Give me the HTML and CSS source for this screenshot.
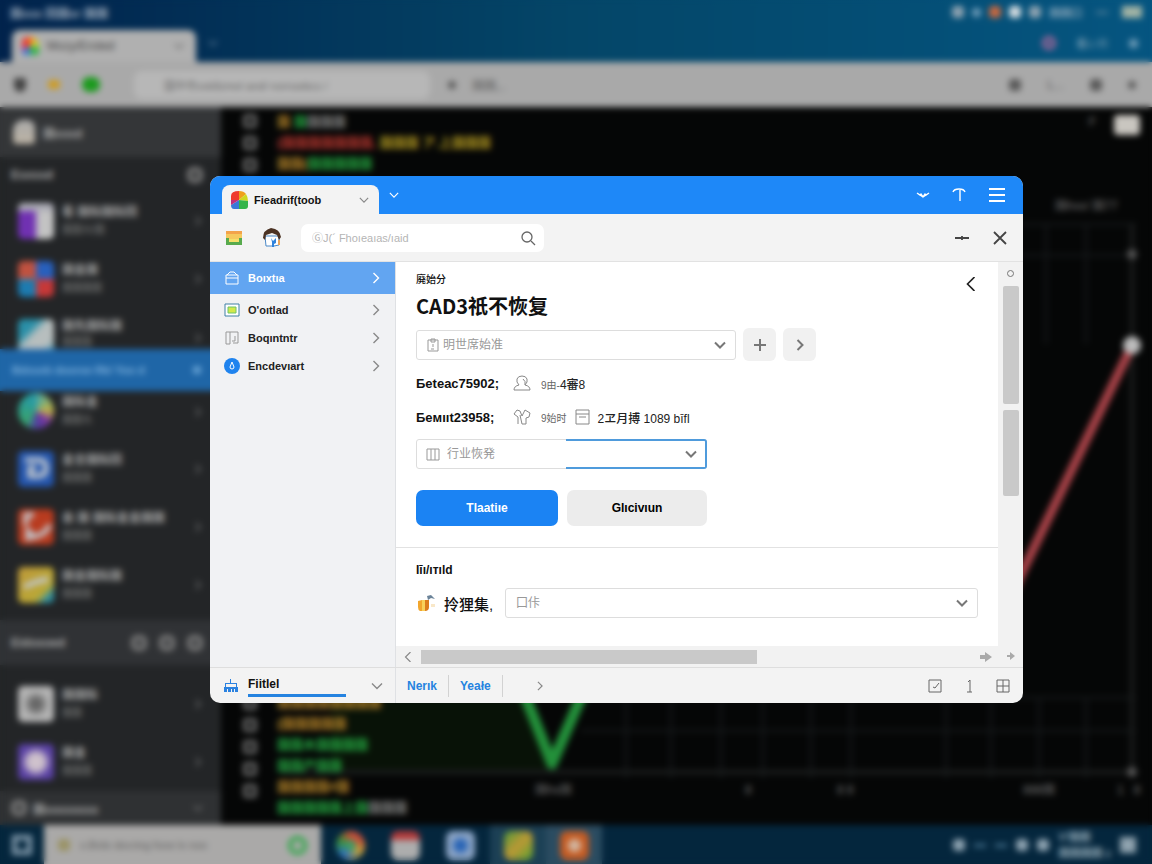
FILE: index.html
```html
<!DOCTYPE html>
<html lang="zh-CN">
<head>
<meta charset="utf-8">
<title>CAD</title>
<link rel="stylesheet" href="styles.css">
</head>
<body>

<!-- shared icons -->
<svg class="sprite" aria-hidden="true">
  <symbol id="down" viewBox="0 0 12 12"><path d="M1 3.5l5 5 5-5"/></symbol>
  <symbol id="right" viewBox="0 0 12 12"><path d="M3.500 1l5 5-5 5"/></symbol>
  <symbol id="left" viewBox="0 0 12 12"><path d="M9 0L3 6l6 6"/></symbol>
  <symbol id="wheel" viewBox="0 0 18 18">
    <path fill="#ef3b2d" d="M9 9H1V5q0-5 8-5z"/><path fill="#f0a01c" d="M9 9V0q5 0 7 3z"/><path fill="#cfd820" d="M9 9l7-6q2 3 2 7z"/>
    <path fill="#35b44a" d="M9 9l9 1v5q0 3-3 3H9z"/><path fill="#3b78d8" d="M9 9v9H4q-3 0-3-4z"/><path fill="#c22f7c" d="M9 9L1 14V9z"/>
  </symbol>
</svg>

<div class="desktop">
  <div class="menubar">
    <span class="menu-title">国xxx 回国xr 国国</span>
    <div class="tray">
      <i class="dot gray"></i><i class="dot small"></i><i class="dot orange"></i><i class="dot white"></i><i class="dot gray"></i><span>国国口</span><i class="dash"></i><i class="battery"></i>
    </div>
  </div>
  <div class="tabbar">
    <div class="bg-tab"><svg class="i18"><use href="#wheel"/></svg><span>Mozy/Eroted</span><svg class="i10 line"><use href="#down"/></svg></div>
    <svg class="i10 line light"><use href="#down"/></svg>
    <div class="tray second"><i class="ring"></i><span>看い片</span><i class="dot small"></i></div>
  </div>
  <div class="bg-toolbar">
    <i class="shield"></i><i class="star"></i><i class="leaf"></i>
    <div class="bg-address"><span>国中市xxk8zmel and/ nornsebcs /</span></div>
    <i class="mark"></i><span class="bg-note">国国,..</span>
    <div class="bg-tools"><i class="mark big"></i><span>L...</span><i class="mark big"></i><i class="mark"></i></div>
  </div>

  <div class="workspace">
    <div class="bg-side">
      <div class="bg-user"><i class="avatar"></i><b>国xxxd</b></div>
      <div class="bg-head"><b>Esxssd</b><i class="tool"></i></div>
      <div class="bg-item"><i class="app purple"></i><p><b>看 国际国际回</b><span>国国元/国</span></p><svg class="i10 line"><use href="#right"/></svg></div>
      <div class="bg-item"><i class="app quad"></i><p><b>国金国</b><span>国国国国</span></p><svg class="i10 line"><use href="#right"/></svg></div>
      <div class="bg-item cut-bottom"><i class="app teal"></i><p><b>国先国际国</b><span>国国国</span></p><svg class="i10 line"><use href="#right"/></svg></div>
      <div class="bg-current"><b>Bdxseb dooroe Rk/ Yoo d</b><i class="mark light"></i></div>
      <div class="bg-item cut-top"><i class="app globe"></i><p><b>国际金</b><span>国国元</span></p><svg class="i10 line"><use href="#right"/></svg></div>
      <div class="bg-item"><i class="app blue"><svg viewBox="0 0 36 36"><path d="M7 9h14q7 0 7 8t-8 8h-8v-8h6"/></svg></i><p><b>金全国际回</b><span>国国国</span></p><svg class="i10 line"><use href="#right"/></svg></div>
      <div class="bg-item"><i class="app red"><svg viewBox="0 0 36 36"><path d="M8 16V6h8M10 32V22l6 6 10-4 6-8"/></svg></i><p><b>会 国 国际金金国国</b><span>国国国</span></p><svg class="i10 line"><use href="#right"/></svg></div>
      <div class="bg-item"><i class="app yellow"><svg viewBox="0 0 36 36"><path d="M6 20l12-5 12-3"/></svg></i><p><b>国金国际国</b><span>国国国</span></p><svg class="i10 line"><use href="#right"/></svg></div>
      <div class="bg-head group"><b>Eidoxoed</b><i class="tool"></i><i class="tool"></i><i class="tool"></i></div>
      <div class="bg-item first"><i class="app silver"></i><p><b>国国际</b><span>国国</span></p><svg class="i10 line"><use href="#right"/></svg></div>
      <div class="bg-item"><i class="app violet"></i><p><b>国金</b><span>国国国</span></p><svg class="i10 line"><use href="#right"/></svg></div>
      <div class="bg-foot"><i class="tool"></i><b>国xxxxxxxx</b><svg class="i10 line"><use href="#down"/></svg></div>
    </div>

    <div class="canvas">
      <svg class="chart" viewBox="0 0 931 717" preserveAspectRatio="none">
        <path class="area" d="M110 590h190l31 74H110z"/>
        <path class="grid" d="M360 623h555M360 590h555M405 590v80M450 590v80M500 590v80M542 590v80M590 590v80M630 590v80M725 590v80M770 590v80M818 590v80M865 590v80M800 117h115M800 148h115M825 117v120M865 117v120"/>
        <path class="axis" d="M60 664h850M911 117v547"/>
        <path class="green" d="M300 578l31 78 34-78"/>
        <path class="red" d="M911 238L780 508"/>
        <circle cx="911" cy="238" r="9"/>
        <circle class="dim" cx="911" cy="664" r="5"/>
        <circle class="dim" cx="911" cy="147" r="5"/>
        <g class="labels">
          <text x="314" y="686">国hx国</text><text x="524" y="686">8</text><text x="616" y="686">8 8</text>
          <text x="802" y="686">888国</text><text x="896" y="686">1 &#8199;8</text><text x="834" y="103">国hxx/ 国77</text>
        </g>
      </svg>
      <div class="rail">
        <div><i></i><i></i><i></i></div>
        <div><i></i><i></i><i></i><i></i><i></i></div>
      </div>
      <div class="code">
        <div>
          <p><em class="o">国</em> <em class="g">国</em><em>国国国</em></p>
          <p><em class="r">(国国国国国国国,</em> <em class="y">国国国 ア.上国国国</em></p>
          <p><em class="o">国国(</em><em class="g">国国国国国</em></p>
        </div>
        <div>
          <p><em class="o">国国国国国国国国</em></p>
          <p><em class="o">(国国国国国</em></p>
          <p><em class="g">国国木国国国国</em></p>
          <p><em class="g">国国产国国</em></p>
          <p><em class="o">国国国国#国</em></p>
          <p><em class="g">国国国国国上国</em><em>国国国</em></p>
        </div>
      </div>
      <div class="corner"><span>F</span><i></i></div>
    </div>
  </div>

  <div class="taskbar">
    <i class="start"></i>
    <div class="task-search"><i class="dot"></i><span>x.Brdx docring fooe lx noo</span><i class="lens"></i></div>
    <i class="task chrome"></i><i class="task calendar"></i><i class="task badge"></i>
    <div class="running"><i class="task note"></i></div>
    <div class="running two"><i class="task fox"></i></div>
    <div class="clock"><i class="dot gray"></i><i class="dash"></i><i class="dash"></i><i class="dot gray"></i><i class="dot gray"></i><p>V'国国<br>国国国国 z</p><i class="notice"></i></div>
  </div>
  <div class="haze"></div>
</div>

<div class="window">
  <header class="titlebar">
    <div class="tab"><svg class="i18"><use href="#wheel"/></svg><span>Fieadrif(toob</span><svg class="i10 line"><use href="#down"/></svg></div>
    <button class="plain new-tab" aria-label="标签"><svg class="i10 line"><use href="#down"/></svg></button>
    <div class="title-tools">
      <button class="plain" aria-label="收起"><svg width="14" height="8" viewBox="0 0 14 8"><path d="M1 2l3 2 1-1 2 3 2-3 1 1 3-2M4 4l3 2 3-2"/></svg></button>
      <button class="plain" aria-label="固定"><svg width="14" height="16" viewBox="0 0 14 16"><path d="M1 5q1-3 6-3t6 3M8 2v12"/></svg></button>
      <button class="plain" aria-label="菜单"><svg class="menu" width="18" height="14" viewBox="0 0 18 14"><path d="M1 1h16M1 7h16M1 13h16"/></svg></button>
    </div>
  </header>

  <div class="toolbar">
    <svg width="18" height="16" viewBox="0 0 18 16"><path fill="#f3a34b" d="M1 1h16v4H1z"/><path fill="#f6c95e" d="M1 4h16v5H1z"/><path fill="#58aa4d" d="M1 8h3v4h10V8h3v7H1z"/><path fill="#f5e06a" d="M4 9h10v3H4z"/></svg>
    <svg width="20" height="20" viewBox="0 0 20 20"><path fill="#fff" stroke="#4a88c7" d="M3 8h14v9l-5 1H4z"/><path fill="#4b3223" d="M1 10Q1 2 9 0q9 1 10 9l-2 3-2-5-5-2-6 2-1 5z"/><path fill="#2f83dc" d="M9 10l2 3 3-3v5l-2 1v3h-2v-5z"/><path fill="#e9a55b" d="M16 12h2v5h-2z"/></svg>
    <div class="search">
      <input type="text" aria-label="搜索" placeholder="ⒼJ(´ Fhoıeaıas/ıaid">
      <svg width="14" height="14" viewBox="0 0 14 14"><circle cx="6" cy="6" r="5"/><path d="M10 10l4 4"/></svg>
    </div>
    <div class="window-tools">
      <button class="plain" aria-label="最小化"><svg width="16" height="6" viewBox="0 0 16 6"><path d="M1 3h14M8 1v4"/></svg></button>
      <button class="plain" aria-label="关闭"><svg width="14" height="14" viewBox="0 0 14 14"><path d="M1 1l12 12M13 1L1 13"/></svg></button>
    </div>
  </div>

  <div class="body">
    <nav class="nav">
      <a class="active" href="#"><svg class="i16" viewBox="0 0 16 16"><path d="M2 5h12v9H2zM3 5l3-3h4l3 3M2 8h12"/></svg><span>Boıxtıa</span><svg class="i12 line"><use href="#right"/></svg></a>
      <a href="#"><svg class="i16" viewBox="0 0 16 16"><path fill="#fff" stroke="#3f80a5" d="M1 2h14v12H1z"/><path fill="#d3e94a" stroke="#6cc46a" d="M4 5h8v6H4z"/></svg><span>O'oıtlad</span><svg class="i12 line"><use href="#right"/></svg></a>
      <a href="#"><svg class="i16" viewBox="0 0 16 16"><path stroke="#999" d="M2 2h12v11H9M2 2v12h4M6 2v12M11 6v5H8"/></svg><span>Boqıntntr</span><svg class="i12 line"><use href="#right"/></svg></a>
      <a href="#"><svg class="i16" viewBox="0 0 16 16"><circle fill="#1f83ee" cx="8" cy="8" r="8"/><path stroke="#fff" d="M8 4l2 5q0 2-2 2t-2-2z"/></svg><span>Encdevıart</span><svg class="i12 line"><use href="#right"/></svg></a>
    </nav>

    <div class="main">
      <section class="panel">
        <div class="panel-head">
          <small>廃始分</small>
          <button class="plain" aria-label="返回"><svg class="i14 line"><use href="#left"/></svg></button>
        </div>
        <h1>CAD3祇不恢复</h1>
        <div class="pick-row">
          <div class="field wide">
            <svg class="lead" viewBox="0 0 14 14"><path d="M2 2h10v11H2zM5 1h4v3H5zM7 6v3M5 11h3"/></svg>
            <select aria-label="明世席始准"><option>明世席始准</option></select>
            <svg class="i12 line caret"><use href="#down"/></svg>
          </div>
          <button class="square" aria-label="添加"><svg width="12" height="12" viewBox="0 0 12 12"><path d="M6 0v12M0 6h12"/></svg></button>
          <button class="square" aria-label="下一个"><svg class="i12 line"><use href="#right"/></svg></button>
        </div>
        <div class="info">
          <strong>Бeteac75902;</strong>
          <svg viewBox="0 0 18 18"><path d="M1 16q0-4 5-5-3-3-2-6 1-3 5-3t5 3q1 3-2 6 5 1 5 5zM10 5q3 2 2 6"/></svg>
          <span>9由-<b>4審8</b></span>
        </div>
        <div class="info">
          <strong>Бeмııt23958;</strong>
          <svg viewBox="0 0 18 18"><path d="M5 16V9L1 6l3-4 3 1 2 5 3-6 5 3-1 4-3 1v6H9l-2-9"/></svg>
          <span>9始时</span>
          <svg viewBox="0 0 18 18"><path d="M2 2h13v14H2zM2 6h13M5 9h7"/></svg>
          <b>2ヱ月搏 1089 bīfl</b>
        </div>
        <div class="field half">
          <svg class="lead" viewBox="0 0 14 14"><path d="M1 2h12v11H1zM5 2v11M9 2v11"/></svg>
          <select aria-label="行业恢発"><option>行业恢発</option></select>
          <svg class="i12 line caret"><use href="#down"/></svg>
        </div>
        <div class="actions">
          <button class="primary">Tlaatiıe</button>
          <button>Glıcivıun</button>
        </div>
      </section>

      <section class="panel lower">
        <h2>Iīı/ıтıld</h2>
        <div class="lower-row">
          <svg width="20" height="18" viewBox="0 0 20 18"><path fill="#f2a62d" d="M2 7l4-1v11H4q-2-1-2-4z"/><path fill="#f8d05a" d="M6 6h3v11H6z"/><path fill="#dc7c1c" d="M9 6h4v7q0 4-4 4z"/><path fill="#6b8399" d="M11 2l4-1 4 4-4-1-3 2z"/><path fill="#f9e8c9" d="M15 10h4v3h-4z"/></svg>
          <label for="group">拎狸集,</label>
          <div class="field grow">
            <select id="group"><option>囗佧</option></select>
            <svg class="i12 line caret"><use href="#down"/></svg>
          </div>
        </div>
      </section>

      <div class="hscroll"><svg class="i10 line"><use href="#left"/></svg><i></i><svg width="12" height="12" viewBox="0 0 12 12"><path d="M0 4h5V1l7 5-7 5V8H0z"/></svg></div>
    </div>

    <div class="vscroll"><b></b><i></i><i class="short"></i><svg width="8" height="8" viewBox="0 0 8 8"><path d="M0 3h3V0l5 4-5 4V5H0z"/></svg></div>
  </div>

  <footer class="statusbar">
    <div class="status-side">
      <svg width="16" height="14" viewBox="0 0 16 14"><path fill="#2b82e0" d="M1 8h14v5H1zM2 4h12v1H2zM2 4h1v4H2zM13 4h1v4h-1zM7 0h1v4H7z"/><path fill="#f3f3f3" d="M4 10h1v3H4zM8 10h1v3H8zM11 10h1v3h-1z"/></svg>
      <span>Fiitlel</span>
      <svg class="i12 line"><use href="#down"/></svg>
    </div>
    <a href="#">Nerık</a>
    <a href="#">Yeałe</a>
    <svg class="i10 line more"><use href="#right"/></svg>
    <div class="status-tools">
      <svg width="14" height="14" viewBox="0 0 14 14"><path d="M1 1h12v12H1zM5 8l2 1 4-5"/></svg>
      <svg width="8" height="14" viewBox="0 0 8 14"><path d="M5 1v12M3 3l2-2M2 13h5"/></svg>
      <svg width="14" height="14" viewBox="0 0 14 14"><path d="M1 1h12v12H1zM7 1v12M1 7h12"/></svg>
    </div>
  </footer>
</div>

</body>
</html>
```
FILE: styles.css
```css
* {
  box-sizing: border-box;
}

body {
  margin: 0;
  position: relative;
  font-family: "Liberation Sans", "Noto Sans CJK SC", sans-serif;
  font-size: 12px;
  color: #111;
}

p, h1, h2 {
  margin: 0;
}

i, em {
  font-style: normal;
  flex: none;
}

svg {
  flex: none;
  fill: none;
}

a {
  text-decoration: none;
}

.sprite {
  position: absolute;
  width: 0;
  height: 0;
}

.i10 { width: 10px; height: 10px; }
.i12 { width: 12px; height: 12px; }
.i14 { width: 14px; height: 14px; }
.i16 { width: 16px; height: 16px; }
.i18 { width: 18px; height: 18px; }

.line {
  stroke: #888;
  stroke-width: 1.4;
}

.line.light {
  stroke: #7792aa;
}

.plain {
  display: flex;
  padding: 0;
  border: 0;
  background: none;
}

/* ---------- desktop behind the window ---------- */

.desktop {
  position: relative;
  display: flex;
  flex-direction: column;
  min-height: 100vh;
  overflow: hidden;
  background: linear-gradient(90deg, #01234c, #044668 50%, #055580);
}

.haze {
  position: absolute;
  inset: 0;
  backdrop-filter: blur(3px);
}

.menubar {
  display: flex;
  align-items: center;
  height: 24px;
  padding: 0 10px;
  font-weight: bold;
  color: #9eacbd;
}

.tray {
  display: flex;
  align-items: center;
  gap: 8px;
  margin-left: auto;
  font-size: 11px;
  color: #8ba8bb;
}

.tray.second {
  gap: 20px;
  padding-right: 14px;
}

.dot {
  width: 12px;
  height: 12px;
  border-radius: 4px;
  background: #d4dcE0;
}

.dot.gray { background: #8ea3b1; }
.dot.small { width: 9px; height: 9px; background: #6f9cb8; }
.dot.orange { background: #c8683f; }

.dash {
  width: 12px;
  height: 3px;
  margin: 0 6px;
  background: #4c7a96;
}

.battery {
  width: 20px;
  height: 12px;
  background: #a3b4a5;
}

.ring {
  width: 14px;
  height: 14px;
  border: 4px solid #a5679a;
  border-radius: 7px;
}

.tabbar {
  display: flex;
  align-items: center;
  height: 38px;
  padding-left: 12px;
}

.bg-tab {
  display: flex;
  align-items: center;
  gap: 8px;
  align-self: flex-end;
  width: 184px;
  height: 32px;
  margin-right: 12px;
  padding: 0 12px 0 9px;
  border-radius: 8px 8px 0 0;
  background: #b0b0b0;
  color: #444;
}

.bg-tab .line {
  margin-left: auto;
  stroke: #555;
}

.bg-toolbar {
  display: flex;
  align-items: center;
  height: 45px;
  padding: 0 16px 0 14px;
  background: #a9a9a9;
  color: #555;
}

.shield {
  width: 12px;
  height: 14px;
  margin-right: 22px;
  border-radius: 2px 2px 6px 6px;
  background: #444;
}

.star {
  width: 12px;
  height: 9px;
  margin-right: 22px;
  border-radius: 4px;
  background: #cf9c20;
}

.leaf {
  width: 18px;
  height: 15px;
  border-radius: 7px;
  background: #1c9a1e;
}

.bg-address {
  display: flex;
  align-items: center;
  width: 296px;
  height: 28px;
  margin: 0 18px 0 34px;
  padding-left: 30px;
  border-radius: 8px;
  background: #b7b7b7;
  font-size: 11px;
  color: #666;
}

.mark {
  width: 8px;
  height: 8px;
  border-radius: 4px;
  background: #5a5a5a;
}

.mark.big { width: 12px; height: 12px; }
.mark.light { background: #6da7d8; }

.bg-note {
  margin-left: 16px;
}

.bg-tools {
  display: flex;
  align-items: center;
  gap: 26px;
  margin-left: auto;
}

.workspace {
  display: flex;
  flex: 1;
}

.bg-side {
  width: 221px;
  flex: none;
  background: #232527;
  color: #aaa;
}

.bg-user,
.bg-head,
.bg-item,
.bg-current,
.bg-foot {
  display: flex;
  align-items: center;
}

.bg-user {
  gap: 8px;
  height: 50px;
  padding-left: 13px;
  background: #343638;
}

.avatar {
  width: 22px;
  height: 24px;
  border-radius: 10px 8px 4px 4px;
  background: linear-gradient(#aaa, #bcb3a4);
}

.bg-head {
  gap: 12px;
  height: 35px;
  padding: 0 18px 0 11px;
}

.bg-head b {
  margin-right: auto;
}

.bg-head.group {
  height: 45px;
  margin-top: 6px;
  background: #303235;
}

.tool {
  width: 16px;
  height: 16px;
  border: 5px solid #777;
  border-radius: 6px;
}

.bg-item {
  gap: 8px;
  height: 58px;
  padding: 0 18px;
}

.bg-item p {
  display: flex;
  flex-direction: column;
  margin-right: auto;
  line-height: 18px;
}

.bg-item span {
  font-size: 10px;
  color: #858585;
}

.cut-bottom {
  align-items: flex-start;
  height: 41px;
  padding-top: 11px;
  overflow: hidden;
}

.bg-item.cut-bottom p {
  line-height: 15px;
}

.cut-top {
  align-items: flex-start;
  height: 49px;
  padding-top: 2px;
}

.cut-bottom .line,
.cut-top .line {
  margin-top: 14px;
}

.bg-item.first {
  height: 68px;
  padding-top: 10px;
}

.app {
  width: 36px;
  height: 36px;
  border-radius: 5px;
}

.app path {
  stroke: #c0c6cc;
  stroke-width: 5;
}

.purple { background: linear-gradient(90deg, #7031b2 0 45%, #c3c3c3 55%); border-top: 8px solid #ababb5; }
.quad { background: conic-gradient(#2860bd 25%, #c63838 0 50%, #1d7bb0 0 75%, #c05240 0); }
.teal { background: linear-gradient(135deg, #298fa8 30%, #b7bebe 45% 75%, #298fa8); }
.globe { border-radius: 18px; background: conic-gradient(#48a7a5, #c2b344 90deg, #7b35a0 130deg, #4f3fa0 180deg, #38a370 220deg, #2599a9); }
.blue { background: #2456ae; }
.red { background: #b83b1f; }
.yellow { background: linear-gradient(135deg, #bd983a, #baa836 70%, #2d8ea0 85%); }
.silver { background: radial-gradient(#666 20%, #b3b3b3 50%); }
.violet { background: radial-gradient(#cfc2cc 30%, #5940a4 60%); }

.bg-current {
  justify-content: space-between;
  height: 42px;
  padding: 0 20px 0 12px;
  background: #1f66a7;
  font-size: 11px;
  color: #7fb2dd;
}

.bg-foot {
  gap: 6px;
  height: 34px;
  padding: 0 18px 0 11px;
  background: #2f3133;
}

.bg-foot .line {
  margin-left: auto;
}

.canvas {
  position: relative;
  display: flex;
  flex: 1;
  background: #050606;
}

.chart {
  position: absolute;
  width: 100%;
  height: 100%;
}

.chart .area { fill: #081207; }
.chart .grid { stroke: #131617; stroke-width: 3; }
.chart .axis { stroke: #191b1b; stroke-width: 5; }
.chart .green { stroke: #23903a; stroke-width: 11; stroke-linejoin: round; }
.chart .red { stroke: #a84248; stroke-width: 9; }
.chart circle { fill: #bbb; }
.chart .dim { fill: #555; }

.chart .labels {
  fill: #777;
  font-size: 12px;
}

.rail {
  position: relative;
  display: flex;
  flex-direction: column;
  justify-content: space-between;
  padding: 7px 20px 27px 22px;
}

.rail div {
  display: grid;
  gap: 8px;
}

.rail i {
  width: 14px;
  height: 14px;
  border: 4px solid #666;
  border-radius: 3px;
}

.code {
  position: relative;
  display: flex;
  flex-direction: column;
  justify-content: space-between;
  padding: 4px 0 7px;
  font-size: 13px;
  font-weight: bold;
  line-height: 21px;
  color: #888;
}

.code .o { color: #b8862a; }
.code .g { color: #25ab43; }
.code .r { color: #b83830; }
.code .y { color: #b39b22; }

.corner {
  position: relative;
  display: flex;
  gap: 18px;
  margin: 8px 12px 0 auto;
  color: #777;
}

.corner i {
  width: 26px;
  height: 20px;
  border-radius: 4px;
  background: #c9c6c0;
}

.taskbar {
  display: flex;
  align-items: center;
  height: 40px;
  background: #04263d;
}

.start {
  width: 20px;
  height: 20px;
  margin: 0 12px;
  border: 5px solid #8098aa;
}

.task-search {
  display: flex;
  align-items: center;
  gap: 10px;
  width: 277px;
  height: 40px;
  margin-right: 15px;
  padding: 0 14px;
  background: #aaa9a8;
  font-size: 11px;
  color: #5f5f5f;
}

.task-search .dot {
  background: #9a9366;
}

.lens {
  width: 19px;
  height: 19px;
  margin-left: auto;
  border: 4px solid #2da747;
  border-radius: 10px;
}

.task {
  width: 29px;
  height: 29px;
  margin-right: 26px;
  border-radius: 7px;
}

.running {
  display: flex;
  align-items: center;
  justify-content: center;
  width: 56px;
  height: 40px;
  margin-left: -11px;
  background: #1c4055;
}

.running.two {
  margin-left: 0;
  background: #2b4c61;
}

.running .task {
  margin: 0;
}

.chrome { border-radius: 15px; background: radial-gradient(#3e9c64 25%, transparent 30%), conic-gradient(#c8503a 60deg, #c6a238 120deg, #2c70c0 220deg, #34923d 290deg, #c9492f); }
.calendar { border-top: 9px solid #b43a3a; background: #adadad; }
.badge { background: radial-gradient(#2763b5 25%, #8ba4c5 45%); }
.note { background: linear-gradient(135deg, #4e9a38, #bc9835 50%, #55a330); }
.fox { background: radial-gradient(#d2b6a0 25%, #c55b22 40%); }

.clock {
  display: flex;
  align-items: center;
  gap: 9px;
  margin-left: auto;
  padding-right: 16px;
  font-size: 11px;
  font-weight: bold;
  line-height: 16px;
  color: #9bb0be;
}

.clock .dash {
  margin: 0;
}

.notice {
  width: 16px;
  height: 16px;
  background: #8fa2ae;
}

/* ---------- window ---------- */

.window {
  position: absolute;
  top: 176px;
  left: 210px;
  right: 129px;
  display: flex;
  flex-direction: column;
  border-radius: 10px;
  overflow: hidden;
  background: #f3f3f3;
}

.titlebar {
  display: flex;
  align-items: center;
  height: 38px;
  padding: 0 17px 0 12px;
  background: #1e88f8;
}

.tab {
  display: flex;
  align-items: center;
  align-self: flex-end;
  gap: 6px;
  width: 157px;
  height: 29px;
  padding: 0 10px 0 8px;
  border-radius: 8px 8px 0 0;
  background: #f3f3f3;
  font-size: 11px;
  font-weight: bold;
}

.tab .line {
  margin-left: auto;
}

.new-tab {
  margin-left: 10px;
}

.new-tab .line {
  stroke: #fff;
}

.title-tools {
  display: flex;
  align-items: center;
  gap: 22px;
  margin-left: auto;
}

.title-tools svg {
  stroke: #fff;
  stroke-width: 1.4;
}

.title-tools .menu {
  stroke-width: 2;
}

.toolbar {
  display: flex;
  align-items: center;
  gap: 19px;
  height: 48px;
  padding: 0 16px 0 15px;
  border-bottom: 1px solid #e2e2e2;
}

.search {
  display: flex;
  align-items: center;
  width: 243px;
  height: 28px;
  padding: 0 9px 0 11px;
  border-radius: 7px;
  background: #fff;
}

.search input {
  flex: 1;
  min-width: 0;
  padding: 0;
  border: 0;
  outline: 0;
  background: none;
  font: inherit;
  font-size: 11px;
}

.search input::placeholder {
  color: #b5b5b5;
}

.search svg {
  stroke: #666;
  stroke-width: 1.3;
  overflow: visible;
}

.window-tools {
  display: flex;
  align-items: center;
  gap: 23px;
  margin-left: auto;
}

.window-tools svg {
  stroke: #444;
  stroke-width: 1.8;
}

.body {
  display: flex;
}

.nav {
  width: 186px;
  flex: none;
  border-right: 1px solid #dfe1e4;
  background: #f1f2f4;
}

.nav a {
  display: flex;
  align-items: center;
  gap: 8px;
  height: 28px;
  padding: 0 13px 0 14px;
  font-size: 11px;
  font-weight: bold;
  color: #222;
}

.nav a.active {
  height: 32px;
  margin-bottom: 2px;
  background: #62a5f1;
  color: #fff;
}

.nav .i16 {
  stroke: none;
}

.nav .active .i16 {
  stroke: #fff;
}

.nav .i12 {
  margin-left: auto;
}

.nav .active .line {
  stroke: #fff;
}

.main {
  flex: 1;
  min-width: 0;
  background: #fff;
}

.panel {
  padding: 10px 20px 21px;
}

.panel-head {
  display: flex;
  justify-content: space-between;
  height: 18px;
}

.panel-head small {
  font-size: 10px;
  font-weight: 500;
  line-height: 16px;
}

.panel-head .line {
  margin-top: 5px;
  stroke: #222;
}

h1 {
  font-family: "Noto Sans CJK SC", sans-serif;
  font-size: 20px;
  font-weight: bold;
  line-height: 32px;
}

.pick-row {
  display: flex;
  align-items: center;
  gap: 7px;
  margin: 6px 0 10px;
}

.field {
  position: relative;
}

.wide { width: 320px; }
.half { width: 291px; }
.grow { flex: 1; }

.field select {
  display: block;
  width: 100%;
  height: 30px;
  padding: 0 26px;
  border: 1px solid #ddd;
  border-radius: 3px;
  appearance: none;
  background: #fff;
  font: inherit;
  color: #999;
}

.grow select {
  padding: 0 10px;
}

/* only the right part is lit by the focus line */
.half::after {
  content: "";
  position: absolute;
  inset: 0 0 0 150px;
  border: 2px solid #4f9bdc;
  border-left: 0;
  border-radius: 0 3px 3px 0;
  pointer-events: none;
}

.half select {
  padding-left: 30px;
}

.lead {
  position: absolute;
  top: 8px;
  left: 10px;
  width: 14px;
  height: 14px;
  stroke: #999;
}

.caret {
  position: absolute;
  top: 9px;
  right: 10px;
  stroke: #777;
  stroke-width: 2;
}

.square {
  display: flex;
  align-items: center;
  justify-content: center;
  width: 33px;
  height: 33px;
  padding: 0;
  border: 0;
  border-radius: 6px;
  background: #f1f1f1;
}

.square svg {
  stroke: #777;
  stroke-width: 2;
}

.info {
  display: flex;
  align-items: center;
  height: 24px;
  margin-bottom: 10px;
}

.info strong {
  width: 97px;
  font-size: 13px;
  font-weight: bold;
}

.info svg {
  width: 18px;
  height: 18px;
  stroke: #888;
}

.info span {
  margin: 0 7px 0 10px;
  font-size: 10px;
  color: #666;
}

.info b {
  margin-left: 6px;
  font-size: 12px;
  font-weight: 500;
  color: #222;
}

.info span b {
  margin: 0;
}

.actions {
  display: flex;
  gap: 9px;
  margin-top: 21px;
}

.actions button {
  width: 140px;
  height: 36px;
  border: 0;
  border-radius: 7px;
  background: #ececec;
  font: inherit;
  font-size: 12px;
  font-weight: bold;
}

.actions .primary {
  width: 142px;
  background: #1b83f3;
  color: #fff;
}

.lower {
  padding: 14px 20px 28px;
  border-top: 1px solid #e2e2e2;
}

h2 {
  margin-bottom: 10px;
  font-size: 12px;
  line-height: 16px;
}

.lower-row {
  display: flex;
  align-items: center;
}

.lower-row label {
  width: 61px;
  margin-left: 8px;
  font-size: 15px;
  font-weight: 500;
}

.hscroll {
  display: flex;
  align-items: center;
  height: 21px;
  padding: 0 6px 0 7px;
  background: #f2f2f2;
}

.hscroll i {
  width: 57%;
  height: 14px;
  margin: 0 auto 0 8px;
  background: #c9c9c9;
}

.hscroll path,
.vscroll path {
  fill: #aaa;
}

.hscroll .line {
  stroke: #888;
}

.vscroll {
  display: flex;
  flex-direction: column;
  align-items: center;
  width: 25px;
  padding: 8px 0 7px;
  background: #f2f2f2;
}

.vscroll b {
  width: 7px;
  height: 7px;
  margin-bottom: 9px;
  border: 1px solid #777;
  border-radius: 4px;
}

.vscroll i {
  width: 16px;
  height: 118px;
  margin-bottom: 6px;
  border-radius: 2px;
  background: #c9c9c9;
}

.vscroll .short {
  height: 86px;
  margin-bottom: auto;
}

.statusbar {
  display: flex;
  align-items: center;
  height: 36px;
  border-top: 1px solid #dedede;
}

.status-side {
  display: flex;
  align-items: center;
  gap: 9px;
  width: 186px;
  height: 36px;
  padding: 0 12px 0 13px;
  border-right: 1px solid #dfe1e4;
  font-weight: bold;
}

.status-side span {
  width: 98px;
  line-height: 19px;
  border-bottom: 3px solid #2583e0;
}

.status-side .line {
  margin-left: auto;
}

.statusbar a {
  padding: 0 11px;
  border-right: 1px solid #d2d2d2;
  font-weight: bold;
  line-height: 22px;
  color: #2583e0;
}

.more {
  margin-left: 32px;
}

.status-tools {
  display: flex;
  align-items: center;
  gap: 23px;
  margin-left: auto;
  padding-right: 13px;
}

.status-tools svg {
  stroke: #666;
}
```
